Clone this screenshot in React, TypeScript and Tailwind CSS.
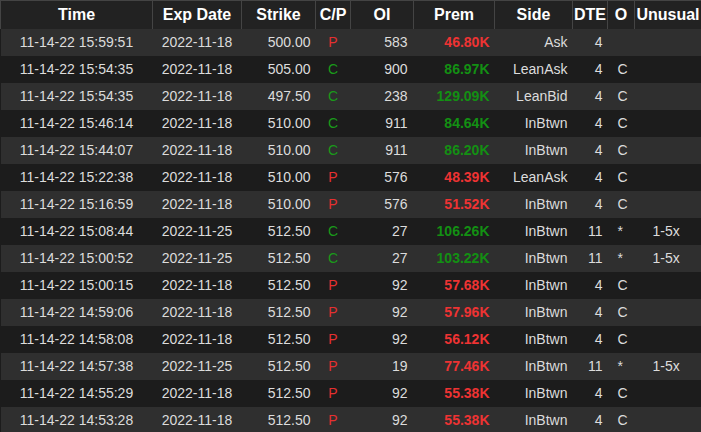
import React from "react";

type Row = [string, string, string, string, string, string, string, string, string, string];

const rows: Row[] = [
  ["11-14-22 15:59:51", "2022-11-18", "500.00", "P", "583", "46.80K", "Ask", "4", "", ""],
  ["11-14-22 15:54:35", "2022-11-18", "505.00", "C", "900", "86.97K", "LeanAsk", "4", "C", ""],
  ["11-14-22 15:54:35", "2022-11-18", "497.50", "C", "238", "129.09K", "LeanBid", "4", "C", ""],
  ["11-14-22 15:46:14", "2022-11-18", "510.00", "C", "911", "84.64K", "InBtwn", "4", "C", ""],
  ["11-14-22 15:44:07", "2022-11-18", "510.00", "C", "911", "86.20K", "InBtwn", "4", "C", ""],
  ["11-14-22 15:22:38", "2022-11-18", "510.00", "P", "576", "48.39K", "LeanAsk", "4", "C", ""],
  ["11-14-22 15:16:59", "2022-11-18", "510.00", "P", "576", "51.52K", "InBtwn", "4", "C", ""],
  ["11-14-22 15:08:44", "2022-11-25", "512.50", "C", "27", "106.26K", "InBtwn", "11", "*", "1-5x"],
  ["11-14-22 15:00:52", "2022-11-25", "512.50", "C", "27", "103.22K", "InBtwn", "11", "*", "1-5x"],
  ["11-14-22 15:00:15", "2022-11-18", "512.50", "P", "92", "57.68K", "InBtwn", "4", "C", ""],
  ["11-14-22 14:59:06", "2022-11-18", "512.50", "P", "92", "57.96K", "InBtwn", "4", "C", ""],
  ["11-14-22 14:58:08", "2022-11-18", "512.50", "P", "92", "56.12K", "InBtwn", "4", "C", ""],
  ["11-14-22 14:57:38", "2022-11-25", "512.50", "P", "19", "77.46K", "InBtwn", "11", "*", "1-5x"],
  ["11-14-22 14:55:29", "2022-11-18", "512.50", "P", "92", "55.38K", "InBtwn", "4", "C", ""],
  ["11-14-22 14:53:28", "2022-11-18", "512.50", "P", "92", "55.38K", "InBtwn", "4", "C", ""],
];

const heads = [
  ["Time", "w-[152px]"],
  ["Exp Date", "w-[89px]"],
  ["Strike", "w-[74px]"],
  ["C/P", "w-[35px]"],
  ["OI", "w-[63px]"],
  ["Prem", "w-[81px]"],
  ["Side", "w-[78px]"],
  ["DTE", "w-[35px]"],
  ["O", "w-[27px]"],
  ["Unusual", "w-[67px]"],
];

export default function App() {
  return (
    <div className="w-[701px] h-[432px] overflow-hidden bg-[#1c1c1c] text-[14px] text-[#dcdcdc]" style={{ fontFamily: "'Liberation Sans', Arial, sans-serif" }}>
      <table className="border-collapse table-fixed w-[701px]">
        <thead>
          <tr className="h-[28px] bg-[#222222] border-t border-[#444]">
            {heads.map(([h, w]) => (
              <th key={h} className={`${w} text-white text-[16px] font-bold text-center border-x border-[#444] p-0 leading-none`}>
                {h}
              </th>
            ))}
          </tr>
        </thead>
        <tbody>
          {rows.map((r, i) => {
            const put = r[3] === "P";
            return (
              <tr key={i} className={`h-[27px] ${i % 2 === 0 ? "bg-[#2f2f2f]" : "bg-[#1c1c1c]"}`}>
                <td className="text-center p-0">{r[0]}</td>
                <td className="text-center p-0">{r[1]}</td>
                <td className="text-right pr-[5px]">{r[2]}</td>
                <td className={`text-center ${put ? "text-[#e53030]" : "text-[#1a9a1a]"}`}>{r[3]}</td>
                <td className="text-right pr-[6px]">{r[4]}</td>
                <td className={`text-right pr-[5px] font-bold ${put ? "text-[#ee3333]" : "text-[#139013]"}`}>{r[5]}</td>
                <td className="text-right pr-[5px]">{r[6]}</td>
                <td className="text-right pr-[5px]">{r[7]}</td>
                <td className="text-left pl-[10px]">{r[8]}</td>
                <td className="text-left pl-[18px]">{r[9]}</td>
              </tr>
            );
          })}
        </tbody>
      </table>
    </div>
  );
}
